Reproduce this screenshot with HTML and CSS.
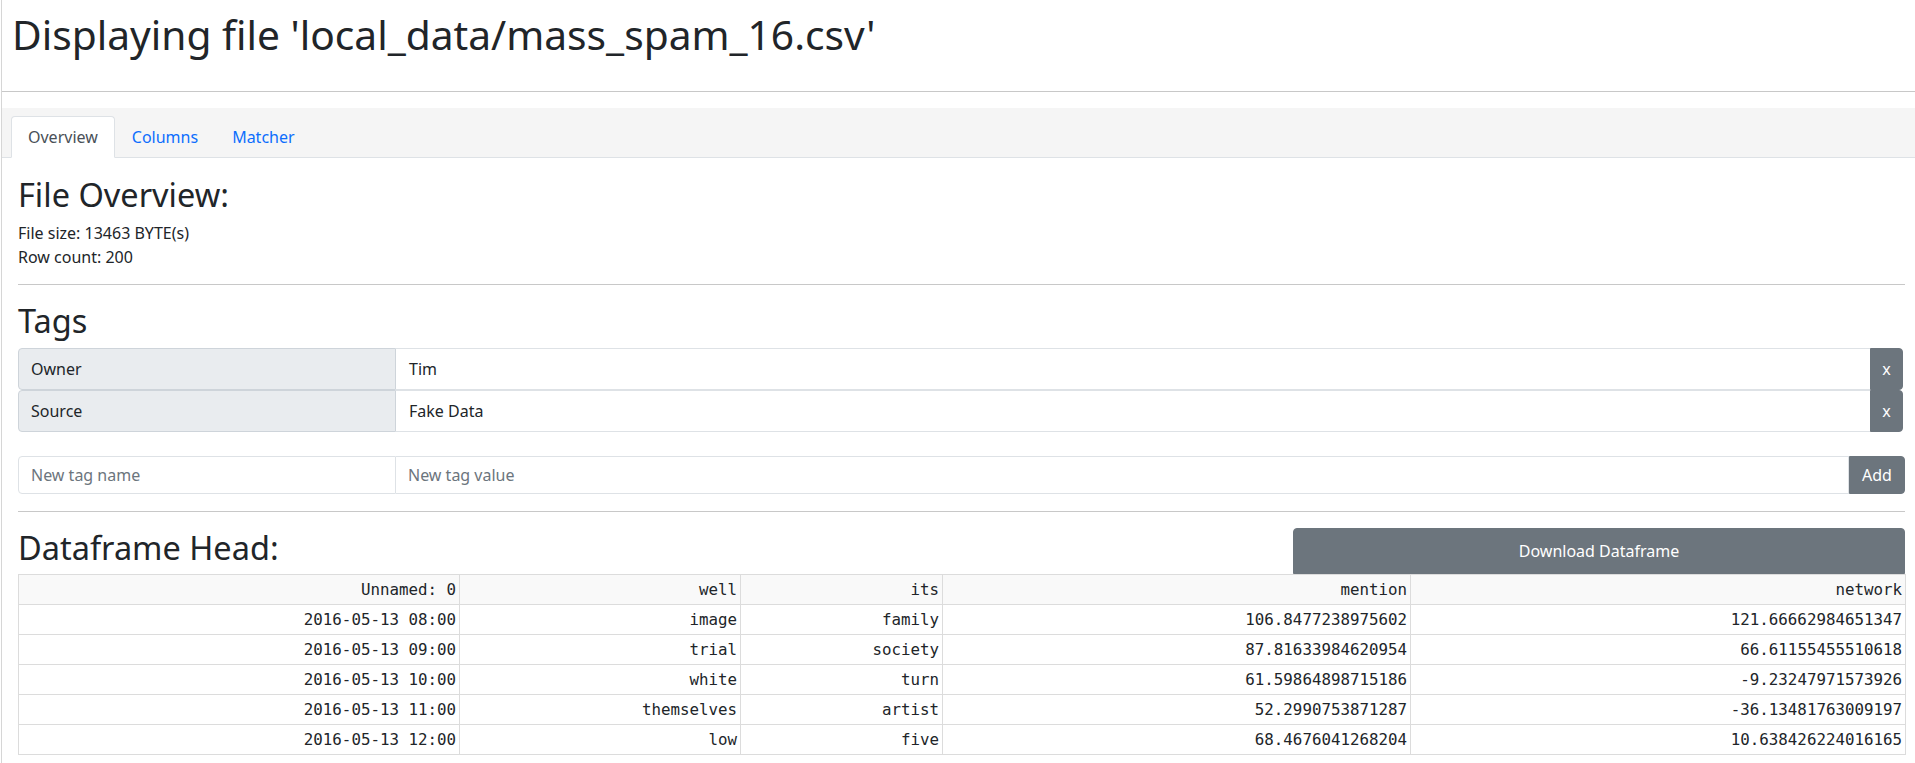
FILE: index.html
```html
<!DOCTYPE html>
<html lang="en">
<head>
<meta charset="utf-8">
<title>Displaying file</title>
<link rel="stylesheet" href="styles.css">
</head>
<body>
<div class="page">
  <header class="header">
    <h1 class="title">Displaying file 'local_data/mass_spam_16.csv'</h1>
  </header>
  <div class="rule-top"></div>
  <nav class="tabbar">
    <a class="tab active">Overview</a>
    <a class="tab">Columns</a>
    <a class="tab">Matcher</a>
  </nav>
  <main class="content">
    <h2 class="heading overview-h">File Overview:</h2>
    <p class="info">File size: 13463 BYTE(s)</p>
    <p class="info">Row count: 200</p>
    <div class="rule"></div>
    <h2 class="heading tags-h">Tags</h2>
    <div class="tags">
      <div class="tag-row">
        <div class="tag-name">Owner</div>
        <div class="tag-value">Tim</div>
        <button class="tag-del">x</button>
      </div>
      <div class="tag-row">
        <div class="tag-name">Source</div>
        <div class="tag-value">Fake Data</div>
        <button class="tag-del">x</button>
      </div>
    </div>
    <div class="new-tag">
      <input class="new-name" type="text" placeholder="New tag name">
      <input class="new-value" type="text" placeholder="New tag value">
      <button class="add-btn">Add</button>
    </div>
    <div class="rule rule-2"></div>
    <div class="df-head">
      <h2 class="heading df-h">Dataframe Head:</h2>
      <button class="download">Download Dataframe</button>
    </div>
    <table class="df">
      <colgroup>
        <col class="c1"><col class="c2"><col class="c3"><col class="c4"><col class="c5">
      </colgroup>
      <thead>
        <tr><th>Unnamed: 0</th><th>well</th><th>its</th><th>mention</th><th>network</th></tr>
      </thead>
      <tbody>
        <tr><td>2016-05-13 08:00</td><td>image</td><td>family</td><td>106.8477238975602</td><td>121.66662984651347</td></tr>
        <tr><td>2016-05-13 09:00</td><td>trial</td><td>society</td><td>87.81633984620954</td><td>66.61155455510618</td></tr>
        <tr><td>2016-05-13 10:00</td><td>white</td><td>turn</td><td>61.59864898715186</td><td>-9.23247971573926</td></tr>
        <tr><td>2016-05-13 11:00</td><td>themselves</td><td>artist</td><td>52.2990753871287</td><td>-36.13481763009197</td></tr>
        <tr><td>2016-05-13 12:00</td><td>low</td><td>five</td><td>68.4676041268204</td><td>10.638426224016165</td></tr>
      </tbody>
    </table>
  </main>
</div>
</body>
</html>
```
FILE: styles.css
```css
* { box-sizing: border-box; }
html, body { margin: 0; padding: 0; background: #fff; }
body {
  font-family: "Noto Sans", "Open Sans", sans-serif;
  font-size: 16px;
  line-height: 1.5;
  color: #212529;
}
.page {
  margin-left: 1px;
  border-left: 1px solid #d6d6d6;
  min-height: 763px;
}
.header { padding: 10px 0 0 10px; }
.title {
  margin: 0 0 33px;
  font-size: 40.7px;
  font-weight: 400;
  line-height: 48px;
}
.rule-top { border-top: 1px solid #c8c8c8; margin-bottom: 16px; }
.tabbar {
  display: flex;
  background: #f5f5f5;
  padding: 8px 0 0 9px;
  border-bottom: 1px solid #dee2e6;
}
.tab {
  display: block;
  padding: 8px 16px;
  border: 1px solid transparent;
  border-top-left-radius: 4px;
  border-top-right-radius: 4px;
  margin-bottom: -1px;
  color: #0d6efd;
  text-decoration: none;
  line-height: 24px;
}
.tab.active {
  color: #495057;
  background: #fff;
  border-color: #dee2e6 #dee2e6 #fff;
}
.content { padding: 0 10px 0 16px; }
.heading {
  margin: 0;
  font-size: 32.5px;
  font-weight: 400;
  line-height: 39px;
}
.overview-h { margin-top: 17px; margin-bottom: 7px; }
.info { margin: 0; line-height: 24px; }
.rule { border-top: 1px solid #c8c8c8; margin-top: 15px; }
.tags-h { margin-top: 16px; margin-bottom: 8px; }
.tags { width: calc(100% - 2px); }
.tag-row { display: flex; height: 42px; }
.tag-name {
  width: 378px;
  flex: none;
  background: #e9ecef;
  border: 1px solid #ced4da;
  border-radius: 4px 0 0 4px;
  padding: 0 12px;
  display: flex;
  align-items: center;
}
.tag-value {
  flex: 1;
  border-top: 1px solid #dee2e6;
  border-bottom: 1px solid #dee2e6;
  padding: 0 13px;
  display: flex;
  align-items: center;
}
.tag-del, .add-btn, .download {
  font-family: inherit;
  font-size: 16px;
  line-height: 24px;
  background: #6c757d;
  color: #fff;
  border: 1px solid #6c757d;
  cursor: pointer;
}
.tag-del {
  width: 33px;
  flex: none;
  border-radius: 0 4px 4px 0;
  padding: 0;
}
.new-tag { display: flex; height: 38px; margin-top: 24px; }
.new-tag input {
  font-family: inherit;
  font-size: 16px;
  line-height: 24px;
  color: #212529;
  border: 1px solid #dee2e6;
  padding: 6px 12px;
  outline: none;
  margin: 0;
}
.new-tag input::placeholder { color: #6c757d; }
.new-name { width: 378px; flex: none; border-radius: 4px 0 0 4px; }
.new-value { flex: 1; min-width: 0; border-left: none !important; }
.add-btn { width: 56px; flex: none; border-radius: 0 4px 4px 0; padding: 0; }
.rule-2 { margin-top: 17px; }
.df-head {
  display: flex;
  align-items: stretch;
  margin-top: 16px;
}
.df-h { flex: 1; margin-bottom: 7px; }
.download {
  width: 612px;
  flex: none;
  border-radius: 4px 4px 0 0;
  padding: 0 12px;
}
.df {
  width: 100%;
  border-collapse: collapse;
  table-layout: fixed;
  font-family: "DejaVu Sans Mono", "Liberation Mono", monospace;
  font-size: 15.8px;
}
.df .c1 { width: 441px; }
.df .c2 { width: 281px; }
.df .c3 { width: 202px; }
.df .c4 { width: 468px; }
.df .c5 { width: 495px; }
.df th, .df td {
  border: 1px solid #dcdcdc;
  text-align: right;
  font-weight: 400;
  padding: 3px 3px 2px;
  line-height: 24px;
  white-space: nowrap;
}
.df thead th { background: #f9f9f9; }
```
